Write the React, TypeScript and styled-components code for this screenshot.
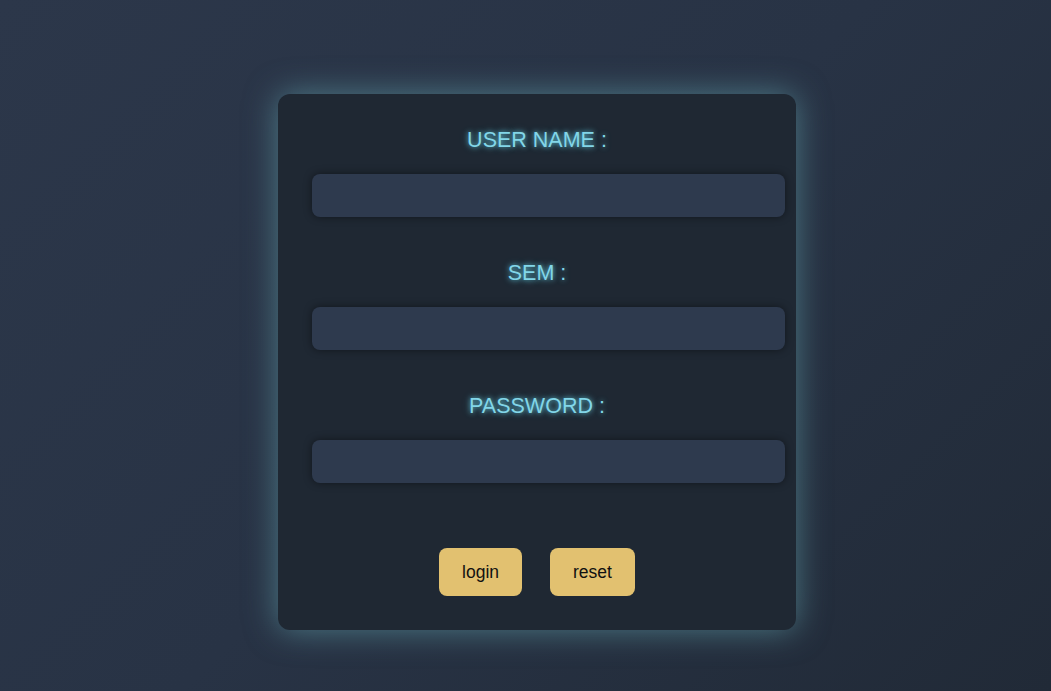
import styled, { createGlobalStyle } from 'styled-components'

const GlobalStyle = createGlobalStyle`
  html, body {
    margin: 0;
    padding: 0;
  }
  body {
    font-family: 'Liberation Sans', Arial, sans-serif;
    background: linear-gradient(135deg, #2c374a 0%, #283345 50%, #212a37 100%);
    min-height: 100vh;
  }
`

const Page = styled.main`
  min-height: 100vh;
  display: flex;
  justify-content: center;
  align-items: flex-start;
  padding: 94px 0 0 23px;
  box-sizing: border-box;
`

const Card = styled.form`
  width: 450px;
  padding: 34px;
  background: #1f2833;
  border-radius: 12px;
  box-shadow: 0 0 32px rgba(100, 165, 175, 0.62);
  display: flex;
  flex-direction: column;
`

const Field = styled.div<{ $last?: boolean }>`
  display: flex;
  flex-direction: column;
  margin-bottom: ${p => (p.$last ? '65px' : '44px')};
`

const Label = styled.label`
  display: block;
  width: 450px;
  text-align: center;
  font-size: 21.5px;
  line-height: 24px;
  color: #82d6e8;
  text-shadow: 0 0 5px rgba(102, 217, 239, 0.85), 0 0 10px rgba(102, 217, 239, 0.3);
  margin-bottom: 22px;
`

const Input = styled.input`
  box-sizing: content-box;
  width: 450px;
  height: 43px;
  padding: 0 11.5px;
  border: none;
  outline: none;
  border-radius: 8px;
  background: #2e3a4e;
  color: #e0e6ef;
  font-size: 16px;
  box-shadow: 0 0 8px rgba(0, 0, 0, 0.45);
`

const Actions = styled.div`
  display: flex;
  justify-content: center;
  gap: 28px;
`

const Button = styled.button`
  height: 48px;
  padding: 0 23px;
  border: none;
  border-radius: 8px;
  background: #e2c170;
  color: #111;
  font-family: 'Liberation Sans', Arial, sans-serif;
  font-size: 17.5px;
  cursor: pointer;
`

const fields = [
  { id: 'username', label: 'USER NAME :', type: 'text' },
  { id: 'sem', label: 'SEM :', type: 'text' },
  { id: 'password', label: 'PASSWORD :', type: 'password' },
]

export default function App() {
  return (
    <>
      <GlobalStyle />
      <Page>
        <Card onSubmit={e => e.preventDefault()}>
          {fields.map((f, i) => (
            <Field key={f.id} $last={i === fields.length - 1}>
              <Label htmlFor={f.id}>{f.label}</Label>
              <Input id={f.id} type={f.type} />
            </Field>
          ))}
          <Actions>
            <Button type='submit'>login</Button>
            <Button type='reset'>reset</Button>
          </Actions>
        </Card>
      </Page>
    </>
  )
}
